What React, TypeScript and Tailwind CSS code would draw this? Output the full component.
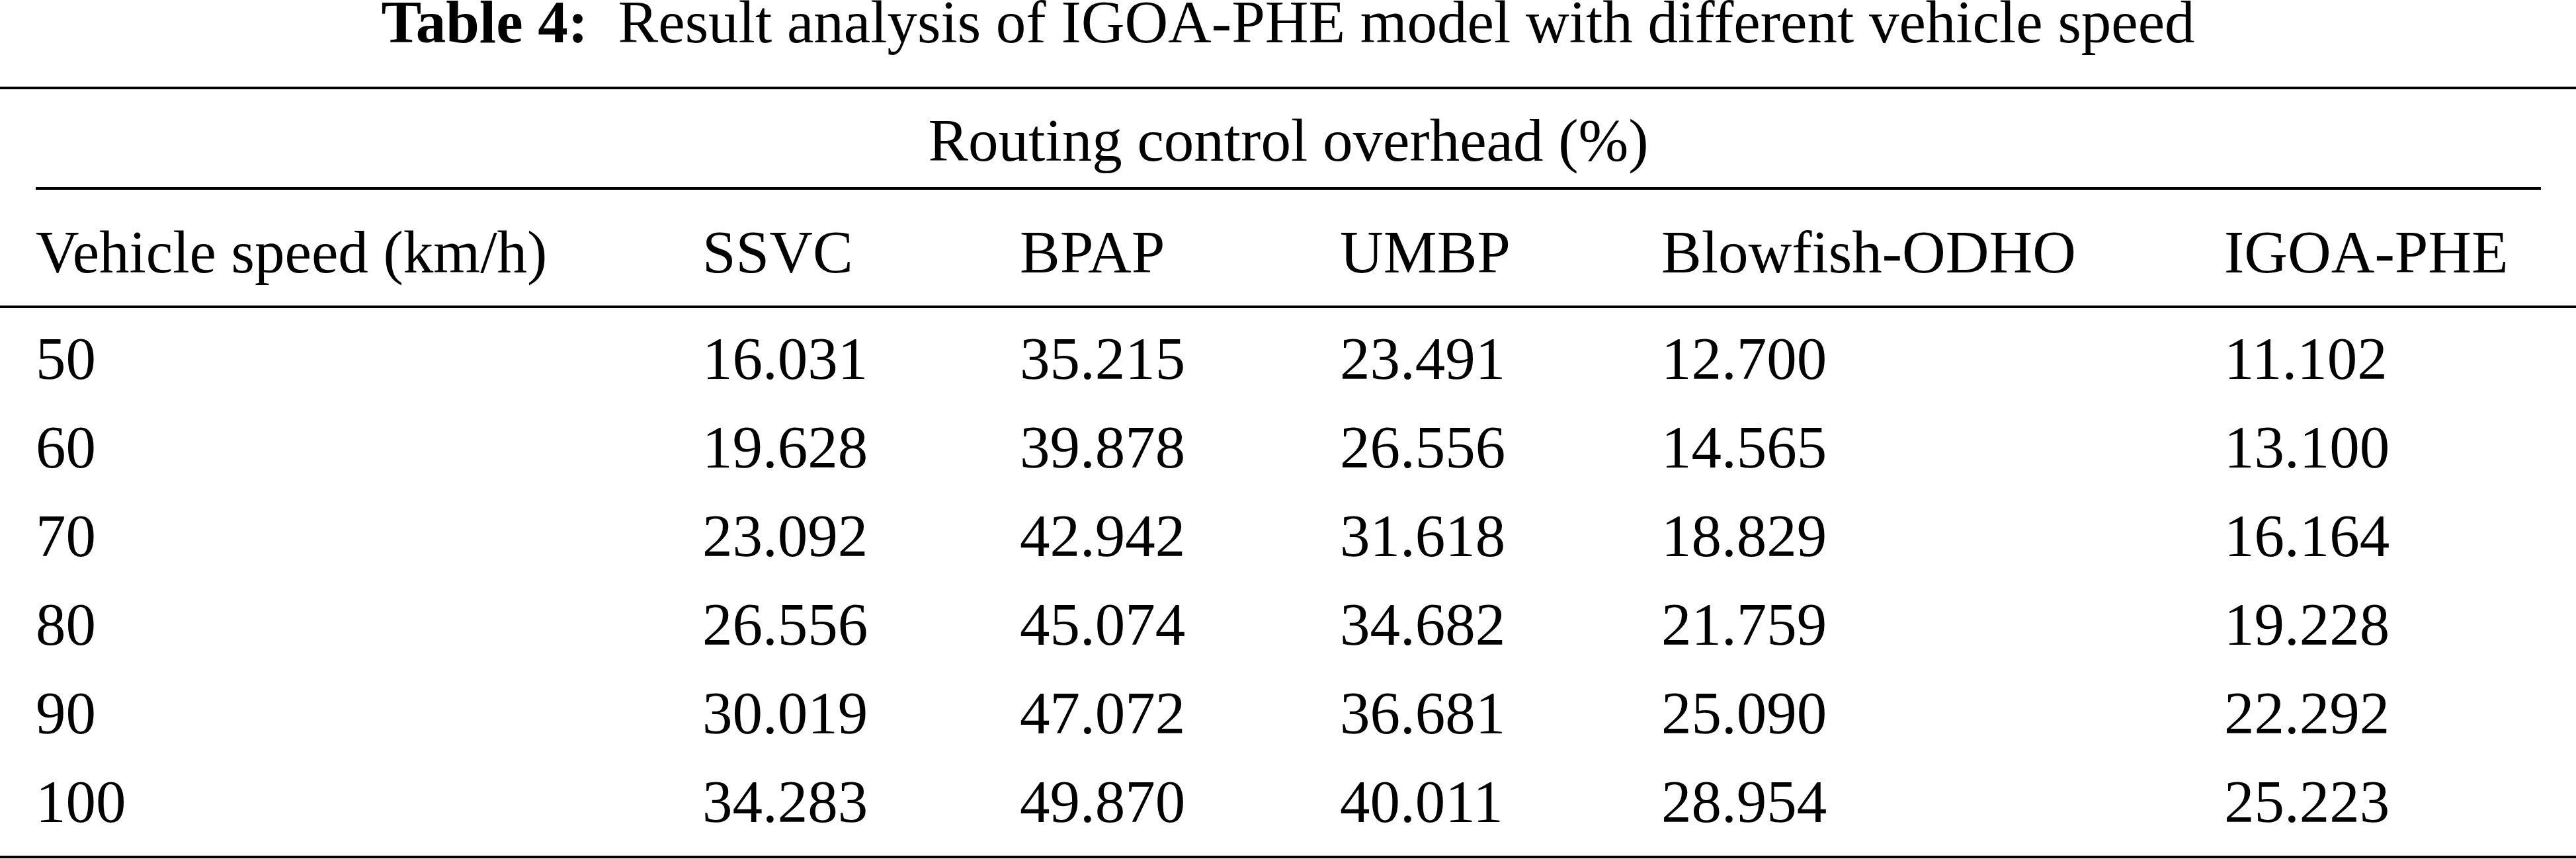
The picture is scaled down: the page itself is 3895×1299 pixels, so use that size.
const columns = ['Vehicle speed (km/h)', 'SSVC', 'BPAP', 'UMBP', 'Blowfish-ODHO', 'IGOA-PHE'];

const rows = [
  ['50', '16.031', '35.215', '23.491', '12.700', '11.102'],
  ['60', '19.628', '39.878', '26.556', '14.565', '13.100'],
  ['70', '23.092', '42.942', '31.618', '18.829', '16.164'],
  ['80', '26.556', '45.074', '34.682', '21.759', '19.228'],
  ['90', '30.019', '47.072', '36.681', '25.090', '22.292'],
  ['100', '34.283', '49.870', '40.011', '28.954', '25.223'],
];

// fixed column starts, matched to the typeset table
const grid = 'grid grid-cols-[1008px_480px_484px_486px_851px_1fr] pl-[54px]';

export default function App() {
  return (
    <div className="w-[3895px] h-[1299px] overflow-hidden bg-white text-black font-['Liberation_Serif','Times_New_Roman',serif] text-[91px]">
      <p className="h-[131px] leading-[67px] text-center whitespace-pre">
        <span className="font-bold">Table 4:</span>
        {'  Result analysis of IGOA-PHE model with different vehicle speed'}
      </p>
      <div className="h-[4px] bg-black" />

      <div className="h-[148px] pt-[8px] leading-[140px] ml-[54px] mr-[53px] text-center">
        Routing control overhead (%)
      </div>
      <div className="h-[4px] bg-black ml-[54px] mr-[53px]" />

      <div className={`${grid} h-[175px] pt-[14px] leading-[161px]`}>
        {columns.map((c) => (
          <div key={c} className="whitespace-nowrap">{c}</div>
        ))}
      </div>
      <div className="h-[4px] bg-black" />

      <div className="pt-[10px] pb-[14px]">
        {rows.map((r) => (
          <div key={r[0]} className={`${grid} leading-[134px]`}>
            {r.map((v, i) => (
              <div key={i}>{v}</div>
            ))}
          </div>
        ))}
      </div>
      <div className="h-[4px] bg-black" />
    </div>
  );
}
